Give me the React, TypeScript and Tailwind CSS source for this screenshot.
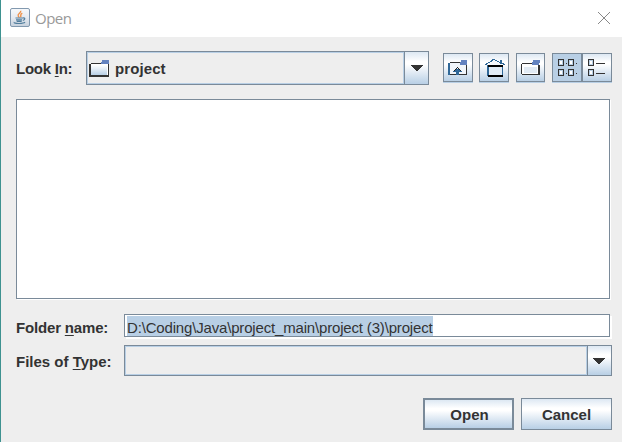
import React from "react";

const metal = "bg-[linear-gradient(to_bottom,#dde8f3_0%,#ffffff_30%,#ffffff_38%,#b8cfe5_100%)]";

function JavaIcon() {
  return (
    <svg className="mb-[2px] block" width="20" height="19" viewBox="0 0 20 19">
      <defs>
        <linearGradient id="java-bg" x1="0" y1="0" x2="0" y2="1">
          <stop offset="0" stopColor="#f7f9fb" />
          <stop offset="0.5" stopColor="#e5eaf0" />
          <stop offset="1" stopColor="#c5d0dc" />
        </linearGradient>
      </defs>
      <rect x="0.5" y="0.5" width="19" height="18" rx="1.5" fill="url(#java-bg)" stroke="#8299af" />
      <path d="M10.7 2.8C11.5 5 7.2 5.7 8.2 8C8.6 9 9.5 9.5 9.5 9.5M12.3 5.2C9.4 6.5 11.5 7.4 10.6 9.2" fill="none" stroke="#ef9149" strokeWidth="1.4" />
      <path d="M5.5 10H12.8M6 11.8H12M6.7 13.4H11.7M12.8 10C15.8 9.5 15 12 12.8 12.4M4.3 14.2C3 15.8 13.5 16 15 14.2" fill="none" stroke="#527e9d" strokeWidth="1.2" />
    </svg>
  );
}

function FolderIcon() {
  return (
    <svg className="block" width="20" height="17" viewBox="0 0 20 17" shapeRendering="crispEdges">
      <defs>
        <linearGradient id="folder-bg" x1="0" y1="0" x2="0" y2="1">
          <stop offset="0" stopColor="#ffffff" />
          <stop offset="0.4" stopColor="#e4edf6" />
          <stop offset="1" stopColor="#b8cfe5" />
        </linearGradient>
      </defs>
      <path d="M2 3H20V17H0V4H2Z" fill="#333333" />
      <path d="M2 4H19V15H2Z" fill="#ffffff" />
      <path d="M2 5H18V15H2Z" fill="url(#folder-bg)" />
      <path d="M13 0H20V4H12V2H13Z" fill="#6382bf" />
    </svg>
  );
}

function NewFolderIcon() {
  return (
    <svg className="block" width="19" height="15" viewBox="0 0 19 15" shapeRendering="crispEdges">
      <path d="M1 3H11V4H1V14H0V4H1ZM1 14H19V15H1ZM17 5H19V15H17Z" fill="#333333" />
      <path d="M1 4H17V14H1Z" fill="#ffffff" />
      <path d="M3 7H16V13H3Z" fill="#e2ebf4" />
      <path d="M12 0H19V3H18V5H11V2H12Z" fill="#6382bf" />
    </svg>
  );
}

function UpIcon() {
  return (
    <svg className="block" width="20" height="15" viewBox="0 0 20 15" shapeRendering="crispEdges">
      <path d="M2 2H12V3H2ZM18 5H19V15H0V14H18Z" fill="#333333" />
      <path d="M0 3H2V15H0Z" fill="#306898" />
      <path d="M2 3H18V14H2Z" fill="#f1f5fa" />
      <path d="M13 0H19V5H12V2H13Z" fill="#6382bf" />
      <path d="M8 9H11V10H13V12H11V15H8V12H6V10H8ZM5 11H6V12H5ZM13 11H14V12H13Z" fill="#306898" />
      <path d="M9 7H10V8H9ZM8 8H9V9H8ZM10 8H11V9H10ZM7 9H8V10H7ZM11 9H12V10H11ZM6 10H7V11H6ZM12 10H13V11H12Z" fill="#222222" />
    </svg>
  );
}

function HomeIcon() {
  return (
    <svg className="block" width="20" height="18" viewBox="0 0 20 18" shapeRendering="crispEdges">
      <path d="M4 4H16V6H4ZM7 2H13V4H7Z" fill="#f5f8fc" />
      <path d="M4 8H17V16H4Z" fill="#e2ecf6" />
      <path d="M2 6H3V17H2ZM3 8H4V16H3ZM17 6H18V17H17ZM0 5H2V6H0ZM18 5H20V6H18ZM1 4H3V5H1ZM3 3H5V4H3ZM5 2H7V3H5ZM7 0H10V1H7ZM6 1H8V2H6ZM10 1H12V2H10ZM12 2H14V3H12ZM14 3H15V1H17V4H19V5H15V4H14Z" fill="#306898" />
      <path d="M3 6H18V8H3ZM3 16H18V18H3Z" fill="#000000" />
    </svg>
  );
}

function ViewIcon({ list = false }: { list?: boolean }) {
  return (
    <svg className="block" width="20" height="17" viewBox="0 0 20 17" shapeRendering="crispEdges">
      {[0, 10].map((y) => (
        <g key={y}>
          <rect x="0.5" y={y + 0.5} width="5" height="6" fill="#b8cfe5" stroke="#333333" />
          <rect x="2" y={y + 2} width="2" height="3" fill="#ffffff" />
          {list ? <rect x="8" y={y + 4} width="9" height="1" fill="#333333" /> : (
            <>
              <rect x="8" y={y + 4} width="1" height="1" fill="#333333" />
              <rect x="10.5" y={y + 0.5} width="5" height="6" fill="#b8cfe5" stroke="#333333" />
              <rect x="12" y={y + 2} width="2" height="3" fill="#ffffff" />
              <rect x="18" y={y + 4} width="1" height="1" fill="#333333" />
            </>
          )}
        </g>
      ))}
    </svg>
  );
}

function Arrow() {
  return (
    <svg className="block" width="12" height="6" viewBox="0 0 12 6" shapeRendering="crispEdges">
      <path d="M0 0H12V1H11V2H10V3H9V4H8V5H7V6H5V5H4V4H3V3H2V2H1V1H0Z" fill="#333333" />
    </svg>
  );
}

function Combo({ className, arrow, children }: { className: string; arrow: string; children?: React.ReactNode }) {
  return (
    <div className={`flex border border-[#7a8a99] ${className}`}>
      <div className="flex min-w-0 flex-1 items-center border border-[#b8cfe5] pl-px">{children}</div>
      <button className={`flex w-6 items-center border-l border-[#7a8a99] ${arrow} ${metal}`}><Arrow /></button>
    </div>
  );
}

const tool = `flex h-[29px] items-center border border-[#7a8a99] shadow-[0_1px_#b8cfe5] ${metal}`;

export default function App() {
  return (
    <main className="h-[442px] w-[622px] overflow-hidden border-l border-[#3e9290] bg-[#eeeeee] font-['Liberation_Sans',Arial,sans-serif] text-[15px] leading-[17px] text-[#333333]">
      <header className="flex h-[37px] items-center bg-white pl-[9px] pr-[11px]">
        <JavaIcon />
        <span className="ml-[5px] flex-1 font-['Open_Sans',sans-serif] text-[15px] tracking-[-0.5px] text-[#999999]">Open</span>
        <svg className="mb-[2px]" width="14" height="14" viewBox="0 0 14 14"><path d="M1 1L13 13M13 1L1 13" stroke="#888888" strokeWidth="1" /></svg>
      </header>
      <section className="flex h-[62px] items-start pl-[15px] pt-[14px]">
        <label className="w-[70px] pt-[9px] font-bold tracking-[-0.25px]">Look <u className="underline-offset-2">I</u>n:</label>
        <Combo className="h-[34px] w-[343px]" arrow="pl-[6px]"><FolderIcon /><span className="ml-1.5 font-bold tracking-[0.1px]">project</span></Combo>
        <div className="ml-[14px] mt-[2px] flex">
          <button className={`w-[30px] pl-1 ${tool}`}><UpIcon /></button>
          <button className={`ml-[6px] w-[30px] pl-[5px] ${tool}`}><HomeIcon /></button>
          <button className={`ml-[7px] w-[29px] pl-1 ${tool}`}><NewFolderIcon /></button>
          <button className="ml-[7px] flex h-[29px] w-[30px] items-center border border-[#7a8a99] bg-[#b8cfe5] pl-[5px] shadow-[0_1px_#b8cfe5]"><ViewIcon /></button>
          <button className={`w-[30px] pl-[5px] ${tool}`}><ViewIcon list /></button>
        </div>
      </section>
      <div className="ml-[15px] h-[200px] w-[594px] border border-[#7a8a99] bg-white shadow-[1px_1px_white]" />
      <section className="flex h-[46px] pl-[15px] pt-[15px]">
        <label className="w-[108px] pt-[5px] font-bold tracking-[-0.17px]">Folder <u className="underline-offset-2">n</u>ame:</label>
        <div className="flex h-[23px] w-[486px] border border-[#7a8a99] bg-white pl-[2px] pt-px shadow-[2px_2px_white]">
          <span className="h-[20px] w-[306px] whitespace-nowrap bg-[#b8cfe5] pt-[3px] tracking-[-0.17px]">D:\Coding\Java\project_main\project (3)\project</span>
        </div>
      </section>
      <section className="flex pl-[15px]">
        <label className="w-[108px] pt-[8px] font-bold">Files of <u className="underline-offset-2">T</u>ype:</label>
        <Combo className="h-[31px] w-[488px]" arrow="pl-[5px]" />
      </section>
      <footer className="mt-[22px] flex justify-end gap-[7px] pr-[10px]">
        <button className={`h-[32px] w-[91px] border-2 border-[#7a8a99] pl-[2px] font-bold ${metal}`}>Open</button>
        <button className={`h-[32px] w-[91px] border border-[#7a8a99] font-bold ${metal}`}>Cancel</button>
      </footer>
    </main>
  );
}
